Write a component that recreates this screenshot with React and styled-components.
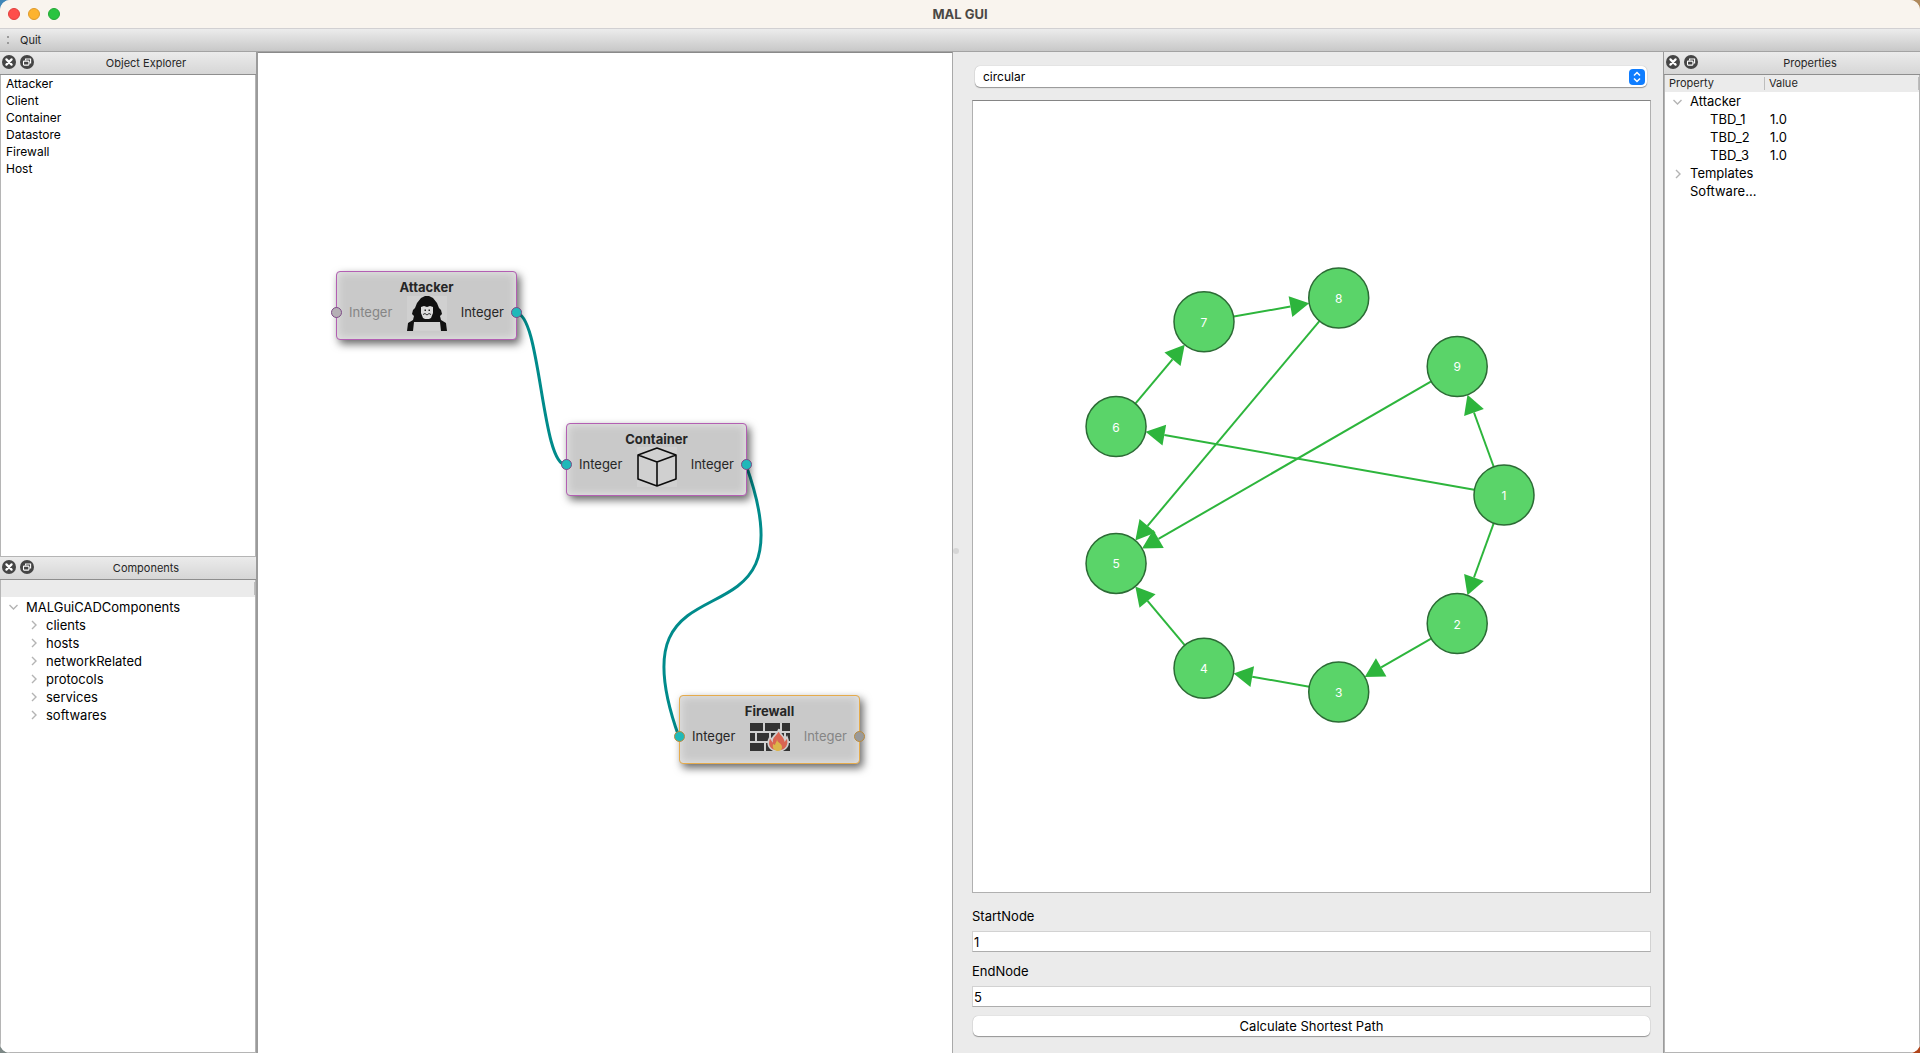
import React, { useState } from "react";
import styled, { createGlobalStyle } from "styled-components";

const GlobalStyle = createGlobalStyle`
  * { box-sizing: border-box; }
  html, body, #root { height: 100%; }
  body {
    margin: 0;
    overflow: hidden;
    background: linear-gradient(135deg, #3f86b8, #b98a55 70%, #b0451a);
    font-family: Inter, "Liberation Sans", sans-serif;
    font-size: 13px;
    line-height: 18px;
    color: #000;
  }
  button, input, select { font: inherit; color: inherit; }
`;

const Window = styled.div`
  height: 100vh;
  display: flex;
  flex-direction: column;
  border-radius: 10px;
  overflow: hidden;
  background: #ebebeb;
`;

const TitleBar = styled.header`
  flex: none;
  display: grid;
  grid-template-columns: 1fr auto 1fr;
  align-items: center;
  height: 29px;
  padding: 0 8px;
  background: #f9f4ee;
  border-bottom: 1px solid #d2d0d2;
`;

const Lights = styled.div`
  display: flex;
  gap: 8px;
`;

const Light = styled.button`
  width: 12px;
  height: 12px;
  padding: 0;
  border-radius: 50%;
  border: 1px solid ${(p) => p.$ring};
  background: ${(p) => p.$fill};
`;

const WindowTitle = styled.h1`
  margin: 0;
  font-size: 13px;
  font-weight: 700;
  line-height: 16px;
  color: #4b4845;
`;

const ToolBar = styled.nav`
  flex: none;
  display: flex;
  align-items: center;
  gap: 11px;
  height: 23px;
  padding: 0 7px;
  background: linear-gradient(#ececec, #c8c8c8);
  border-bottom: 1px solid #a3a3a3;
`;

const Grip = styled.span`
  display: flex;
  flex-direction: column;
  gap: 4px;
  &::before, &::after {
    content: "";
    width: 2px;
    height: 2px;
    background: #9a9a9a;
  }
`;

const ToolButton = styled.button`
  padding: 0;
  border: 0;
  background: none;
  font-size: 11px;
  color: #222;
`;

const Workspace = styled.main`
  flex: 1;
  min-height: 0;
  display: grid;
  grid-template-columns: 258px 695fr 710fr 257px;
`;

const DockColumn = styled.aside`
  display: flex;
  flex-direction: column;
  min-height: 0;
  min-width: 0;
  border-${(p) => p.$edge}: ${(p) => p.$line}px solid #9b9b9b;
`;

const Dock = styled.section`
  flex: ${(p) => p.$grow} 1 0;
  min-height: 0;
  display: flex;
  flex-direction: column;
`;

const DockHeader = styled.header`
  flex: none;
  display: flex;
  align-items: center;
  gap: 4px;
  height: 23px;
  padding: 0 2px 2px;
  background: linear-gradient(#ebebeb, #d6d6d6);
  border-bottom: 1px solid #8e8e8e;
`;

const DockTitle = styled.h2`
  flex: 1;
  margin: 0;
  padding-top: 2px;
  text-align: center;
  font-size: 11px;
  font-weight: 400;
  color: #262626;
`;

const DockButton = styled.button`
  width: 14px;
  height: 14px;
  padding: 0;
  border: 0;
  background: none;
  svg { display: block; }
`;

const DockBody = styled.div`
  flex: 1;
  min-height: 0;
  background: #fff;
  border: 1px solid #b5b5b5;
  border-top: 0;
`;

const ObjectList = styled.ul`
  margin: 0;
  padding: 0 5px;
  list-style: none;
  font-size: 12px;
  line-height: 17px;
`;

const EmptyHeader = styled.div`
  height: 17px;
  padding: 2px 0;
  background: #ebebeb;
  &::after {
    content: "";
    display: block;
    height: 13px;
    border-right: 1px solid #bdbdbd;
  }
`;

const Tree = styled.ul`
  margin: 0;
  padding: 0;
  list-style: none;
`;

const TreeItem = styled.li`
  display: flex;
  align-items: center;
  gap: 7px;
  height: 18px;
  padding-top: 1px;
  padding-left: ${(p) => 6 + p.$level * 20}px;
`;

const PropertyTable = styled.table`
  width: 100%;
  border-collapse: collapse;
  table-layout: fixed;
  td, th { padding: 0; text-align: left; font-weight: 400; }
  td { height: 18px; padding: 1px 0 0 5px; line-height: 17px; white-space: nowrap; }
  td:first-child { padding: 0; }
`;

const HeadCell = styled.th`
  width: ${(p) => p.$width};
  height: 17px;
  background: #ebebeb;
  font-size: 11px;
  color: #262626;
  line-height: 13px;
  span {
    display: block;
    padding-left: 4px;
    border-right: 1px solid #bdbdbd;
  }
`;

const Canvas = styled.section`
  position: relative;
  min-width: 0;
  overflow: hidden;
  background: #fff;
  border-top: 1px solid #8a8a8a;
  border-right: 1px solid #a9a9a9;
`;

const Wires = styled.svg`
  position: absolute;
  inset: 0;
  width: 100%;
  height: 100%;
`;

const NodeCard = styled.article`
  position: absolute;
  left: ${(p) => p.$x}px;
  top: ${(p) => p.$y}px;
  width: 181px;
  height: ${(p) => p.$h}px;
  display: flex;
  flex-direction: column;
  padding: 7px 12px 8px;
  border: 1px solid ${(p) => p.$line};
  border-radius: 4px;
  background: #c9c9c9;
  box-shadow: 3px 4px 8px rgba(0, 0, 0, 0.6), inset 0 0 9px 1px rgba(255, 255, 255, 0.5);
`;

const NodeTitle = styled.h3`
  margin: 0;
  text-align: center;
  font-size: 13px;
  font-weight: 700;
  line-height: 16px;
  color: #262626;
`;

const PortRow = styled.div`
  flex: 1;
  min-height: 0;
  display: flex;
  justify-content: space-between;
  align-items: center;
  svg { flex: none; }
`;

const PortLabel = styled.span`
  align-self: flex-start;
  line-height: 34px;
  color: ${(p) => (p.$on ? "#262626" : "#858585")};
`;

const Port = styled.i`
  position: absolute;
  top: 35px;
  ${(p) => p.$side}: -6px;
  width: 11px;
  height: 11px;
  border-radius: 50%;
  border: 1px solid ${(p) => p.$line};
  background: ${(p) => (p.$on ? "#1fb9b9" : p.$off)};
`;

const Analysis = styled.section`
  display: flex;
  min-width: 0;
  min-height: 0;
  padding: 14px 12px 17px 0;
`;

const SplitHandle = styled.div`
  flex: none;
  width: 19px;
  display: flex;
  align-items: center;
  &::before {
    content: "";
    width: 6px;
    height: 6px;
    border-radius: 50%;
    background: #d6d6d6;
  }
`;

const AnalysisForm = styled.form`
  flex: 1;
  min-width: 0;
  display: flex;
  flex-direction: column;
`;

const SelectBox = styled.div`
  flex: none;
  display: grid;
  align-items: center;
  margin: 0 4px 13px 3px;
  height: 21px;
  border-radius: 5px;
  background: #fff;
  box-shadow: 0 1px 1px rgba(0, 0, 0, 0.35), 0 0 1px rgba(0, 0, 0, 0.3);
  > * { grid-area: 1 / 1; }
  svg { justify-self: end; margin-right: 2px; pointer-events: none; }
`;

const Select = styled.select`
  appearance: none;
  width: 100%;
  height: 21px;
  padding: 0 8px;
  border: 0;
  background: none;
  font-size: 12px;
  line-height: 21px;
`;

const GraphView = styled.div`
  flex: 1;
  min-height: 0;
  display: flex;
  align-items: center;
  justify-content: center;
  background: #fff;
  border: 1px solid #b0b0b0;
  border-top-color: #858585;
  margin-bottom: 14px;
  text { font-size: 12px; fill: #fff; text-anchor: middle; }
`;

const Label = styled.label`
  flex: none;
  line-height: 18px;
  margin-bottom: 6px;
`;

const TextBox = styled.input`
  flex: none;
  width: 100%;
  height: 21px;
  margin-bottom: ${(p) => p.$gap}px;
  padding: 0 1px;
  border: 1px solid #d2d2d2;
  border-bottom-color: #adadad;
  border-radius: 0;
  background: #fff;
  outline: none;
`;

const PushButton = styled.button`
  flex: none;
  height: 20px;
  margin: 0 1px;
  padding: 0;
  border: 0;
  border-radius: 5px;
  background: #fff;
  line-height: 20px;
  box-shadow: 0 1px 1px rgba(0, 0, 0, 0.35), 0 0 1px rgba(0, 0, 0, 0.3);
`;

const CloseIcon = () => (
  <svg width="14" height="14" viewBox="0 0 14 14">
    <circle cx="7" cy="7" r="7" fill="#454545" />
    <path d="M4.4 4.4l5.2 5.2M9.6 4.4L4.4 9.6" stroke="#fff" strokeWidth="2.2" strokeLinecap="round" />
  </svg>
);

const FloatIcon = () => (
  <svg width="14" height="14" viewBox="0 0 14 14" fill="none" stroke="#fff" strokeWidth="1.1">
    <circle cx="7" cy="7" r="7" fill="#454545" stroke="none" />
    <path d="M5.6 5.6V4h5v4H9.2" />
    <rect x="3.5" y="6.1" width="5.4" height="4" rx=".6" />
  </svg>
);

const Chevron = ({ open }) => (
  <svg width="12" height="12" viewBox="0 0 12 12" fill="none" stroke="#b4b4b4" strokeWidth="1.4">
    <path d={open ? "M2.5 4L6.5 8L10.5 4" : "M5 2L9 6L5 10"} />
  </svg>
);

const AttackerIcon = () => (
  <svg width="40" height="35" viewBox="0 0 40 35">
    <rect width="40" height="35" fill="#d0d0d0" />
    <path
      d="M0 35L1 27L6 24L7 20L5 18L6 14L8 12L10 7L14 2L18 0H22L26 2L30 7L32 12L34 14L35 18L33 20L34 24L39 27L40 35H34L33 26H7L6 35Z"
      fill="#111"
    />
    <path d="M14 11L17 10L20 11L23 10L26 11V17L24 22L22 23H18L16 22L14 17Z" fill="#dcdcdc" />
    <path d="M17.500 13.500h1.500v1.500h-1.500zM21.500 13.500h1.500v1.500h-1.500z" fill="#222" />
    <path d="M16 18.500l2-1 2 1.500 2-1.500 2 1" stroke="#333" fill="none" />
  </svg>
);

const BoxIcon = () => (
  <svg width="40" height="40" viewBox="0 0 40 40" fill="none" stroke="#0c0c0c" strokeWidth="1.6" strokeLinejoin="round">
    <rect width="40" height="40" fill="#d0d0d0" stroke="none" />
    <path d="M1 8L20 1L39 8V32L20 39L1 32ZM1 8L20 15L39 8M20 15V39" />
  </svg>
);

const FirewallIcon = () => (
  <svg width="40" height="28" viewBox="0 0 40 28">
    <rect width="40" height="28" fill="#d0d0d0" />
    <path
      d="M0 0h13v8H0zM15 0h15v8H15zM32 0h8v8h-8zM0 10h5v8H0zM7 10h12v8H7zM21 10h13v8H21zM36 10h4v8h-4zM0 20h14v8H0zM16 20h14v8H16zM32 20h8v8h-8z"
      fill="#333"
    />
    <path
      d="M29 6C29 11 34 13 35 17L37 14C40 21 37 28 28 28C19 28 16 21 20 14L22 17C22 13 28 11 29 6Z"
      fill="#d96552"
      stroke="#d0d0d0"
      strokeWidth="1.6"
    />
    <path d="M27 16C27 20 32 20 32 24C32 27 30 28 28 28C25 28 22 26 23 21L25 22C25 20 27 19 27 16Z" fill="#dcb54a" />
  </svg>
);

const OBJECTS = ["Attacker", "Client", "Container", "Datastore", "Firewall", "Host"];
const COMPONENTS = ["clients", "hosts", "networkRelated", "protocols", "services", "softwares"];
const PROPERTIES = [
  { name: "Attacker", level: 0, open: true },
  { name: "TBD_1", level: 1, value: "1.0" },
  { name: "TBD_2", level: 1, value: "1.0" },
  { name: "TBD_3", level: 1, value: "1.0" },
  { name: "Templates", level: 0, open: false },
  { name: "Software...", level: 0 },
];

const PURPLE = { line: "#b35fb3", port: "#7d4a86" };
const ORANGE = { line: "#e5ab4c", port: "#b98a3c" };
const NODES = [
  { title: "Attacker", x: 78, y: 218, h: 69, icon: AttackerIcon, tone: PURPLE, input: false, output: true },
  { title: "Container", x: 308, y: 370, h: 73, icon: BoxIcon, tone: PURPLE, input: true, output: true },
  { title: "Firewall", x: 421, y: 642, h: 69, icon: FirewallIcon, tone: ORANGE, input: true, output: false },
];

const EDGES = [[1, 2], [2, 3], [3, 4], [4, 5], [6, 7], [7, 8], [8, 5], [9, 5], [1, 9], [1, 6]];
const RING = 200;
const NODE_R = 30;

const placeOf = (id) => {
  const angle = ((id - 1) * 2 * Math.PI) / 9;
  return [222 + RING * Math.cos(angle), 238 + RING * Math.sin(angle)];
};

function Edge({ from, to }) {
  const [x1, y1] = placeOf(from);
  const [x2, y2] = placeOf(to);
  const length = Math.hypot(x2 - x1, y2 - y1);
  const ux = (x2 - x1) / length;
  const uy = (y2 - y1) / length;
  const tip = [x2 - ux * NODE_R, y2 - uy * NODE_R];
  const base = [tip[0] - ux * 19, tip[1] - uy * 19];
  const points = [
    tip,
    [base[0] - uy * 10.5, base[1] + ux * 10.5],
    [base[0] + uy * 10.5, base[1] - ux * 10.5],
  ];
  return (
    <g stroke="#2db53c" fill="#2db53c">
      <line x1={x1} y1={y1} x2={base[0]} y2={base[1]} strokeWidth="2" />
      <polygon points={points.map((p) => p.join(",")).join(" ")} stroke="none" />
    </g>
  );
}

function Graph() {
  return (
    <svg width="460" height="480" viewBox="0 0 460 480" role="img" aria-label="Attack graph">
      {EDGES.map(([from, to]) => (
        <Edge key={`${from}-${to}`} from={from} to={to} />
      ))}
      {[1, 2, 3, 4, 5, 6, 7, 8, 9].map((id) => {
        const [x, y] = placeOf(id);
        return (
          <g key={id}>
            <circle cx={x} cy={y} r={NODE_R} fill="#5ad469" stroke="#2c6b35" strokeWidth="1.5" />
            <text x={x} y={y + 5}>{id}</text>
          </g>
        );
      })}
    </svg>
  );
}

function DockBar({ title }) {
  return (
    <DockHeader>
      <DockButton type="button" aria-label={`Close ${title}`}><CloseIcon /></DockButton>
      <DockButton type="button" aria-label={`Float ${title}`}><FloatIcon /></DockButton>
      <DockTitle>{title}</DockTitle>
    </DockHeader>
  );
}

function FlowNode({ node }) {
  const Icon = node.icon;
  return (
    <NodeCard $x={node.x} $y={node.y} $h={node.h} $line={node.tone.line}>
      <NodeTitle>{node.title}</NodeTitle>
      <PortRow>
        <PortLabel $on={node.input}>Integer</PortLabel>
        <Icon />
        <PortLabel $on={node.output}>Integer</PortLabel>
      </PortRow>
      <Port $side="left" $on={node.input} $off="#b5b0b5" $line={node.tone.port} />
      <Port $side="right" $on={node.output} $off="#999" $line={node.tone.port} />
    </NodeCard>
  );
}

export default function App() {
  const [layout, setLayout] = useState("circular");
  const [start, setStart] = useState("1");
  const [end, setEnd] = useState("5");

  return (
    <>
      <GlobalStyle />
      <Window>
        <TitleBar>
          <Lights>
            <Light type="button" aria-label="Close" $fill="#fe4f4c" $ring="#e0403e" />
            <Light type="button" aria-label="Minimize" $fill="#fdb32f" $ring="#de9a2b" />
            <Light type="button" aria-label="Zoom" $fill="#2ac440" $ring="#24a836" />
          </Lights>
          <WindowTitle>MAL GUI</WindowTitle>
        </TitleBar>
        <ToolBar>
          <Grip />
          <ToolButton type="button">Quit</ToolButton>
        </ToolBar>
        <Workspace>
          <DockColumn $edge="right" $line={2}>
            <Dock $grow={505}>
              <DockBar title="Object Explorer" />
              <DockBody>
                <ObjectList>
                  {OBJECTS.map((name) => <li key={name}>{name}</li>)}
                </ObjectList>
              </DockBody>
            </Dock>
            <Dock $grow={496}>
              <DockBar title="Components" />
              <DockBody>
                <EmptyHeader />
                <Tree>
                  <TreeItem $level={0}><Chevron open />MALGuiCADComponents</TreeItem>
                  {COMPONENTS.map((name) => (
                    <TreeItem key={name} $level={1}><Chevron />{name}</TreeItem>
                  ))}
                </Tree>
              </DockBody>
            </Dock>
          </DockColumn>

          <Canvas>
            <Wires fill="none" stroke="#008b8b" strokeWidth="3">
              <path d="M258 260C283 260 283 412 308 412" />
              <path d="M488 412C560 612 349 484 421 684" />
            </Wires>
            {NODES.map((node) => <FlowNode key={node.title} node={node} />)}
          </Canvas>

          <Analysis>
            <SplitHandle />
            <AnalysisForm onSubmit={(e) => e.preventDefault()}>
              <SelectBox>
                <Select aria-label="Layout" value={layout} onChange={(e) => setLayout(e.target.value)}>
                  <option>circular</option>
                </Select>
                <svg width="16" height="16" viewBox="0 0 16 16" fill="none">
                  <rect width="16" height="16" rx="4" fill="#0f7dff" />
                  <path d="M5 6.500L8 3.500L11 6.500M5 9.500L8 12.500L11 9.500" stroke="#fff" strokeWidth="1.5" />
                </svg>
              </SelectBox>
              <GraphView><Graph /></GraphView>
              <Label htmlFor="start-node">StartNode</Label>
              <TextBox id="start-node" $gap={10} value={start} onChange={(e) => setStart(e.target.value)} />
              <Label htmlFor="end-node">EndNode</Label>
              <TextBox id="end-node" $gap={9} value={end} onChange={(e) => setEnd(e.target.value)} />
              <PushButton type="submit">Calculate Shortest Path</PushButton>
            </AnalysisForm>
          </Analysis>

          <DockColumn $edge="left" $line={1}>
            <Dock $grow={1}>
              <DockBar title="Properties" />
              <DockBody>
                <PropertyTable>
                  <thead>
                    <tr>
                      <HeadCell $width="100px"><span>Property</span></HeadCell>
                      <HeadCell $width="auto"><span>Value</span></HeadCell>
                    </tr>
                  </thead>
                  <tbody>
                    {PROPERTIES.map(({ name, level, open, value }) => (
                      <tr key={name}>
                        <td>
                          <TreeItem as="div" $level={level}>
                            {open === undefined ? <svg width="12" height="12" /> : <Chevron open={open} />}
                            {name}
                          </TreeItem>
                        </td>
                        <td>{value}</td>
                      </tr>
                    ))}
                  </tbody>
                </PropertyTable>
              </DockBody>
            </Dock>
          </DockColumn>
        </Workspace>
      </Window>
    </>
  );
}
